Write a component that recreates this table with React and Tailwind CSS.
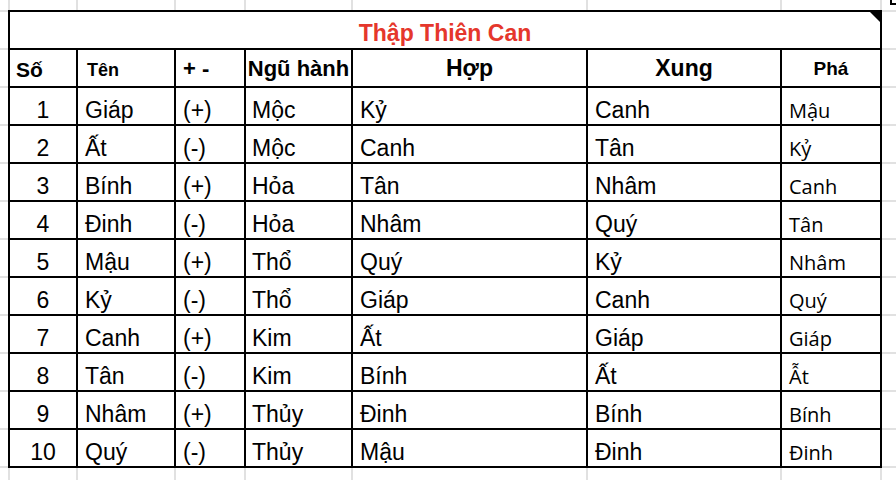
import React from "react";

const rows = [
  ["1", "Giáp", "(+)", "Mộc", "Kỷ", "Canh", "Mậu"],
  ["2", "Ất", "(-)", "Mộc", "Canh", "Tân", "Kỷ"],
  ["3", "Bính", "(+)", "Hỏa", "Tân", "Nhâm", "Canh"],
  ["4", "Đinh", "(-)", "Hỏa", "Nhâm", "Quý", "Tân"],
  ["5", "Mậu", "(+)", "Thổ", "Quý", "Kỷ", "Nhâm"],
  ["6", "Kỷ", "(-)", "Thổ", "Giáp", "Canh", "Quý"],
  ["7", "Canh", "(+)", "Kim", "Ất", "Giáp", "Giáp"],
  ["8", "Tân", "(-)", "Kim", "Bính", "Ất", "Ẫt"],
  ["9", "Nhâm", "(+)", "Thủy", "Đinh", "Bính", "Bính"],
  ["10", "Quý", "(-)", "Thủy", "Mậu", "Đinh", "Đinh"],
];

const cols = "grid-cols-[66px_96px_68px_105px_233px_192px_98px]";

function Strip({ count }) {
  return (
    <div className="flex flex-col gap-y-[2px] py-[2px] bg-[#e1e1e1] w-full">
      {Array.from({ length: count }).map((_, i) => (
        <div key={i} className="h-[36px] bg-white" />
      ))}
    </div>
  );
}

function ColStrip({ h }) {
  return (
    <div
      className={`grid grid-cols-[8px_66px_96px_68px_105px_233px_192px_98px_1fr] gap-x-[2px] bg-[#e1e1e1] ${h}`}
    >
      {Array.from({ length: 9 }).map((_, i) => (
        <div key={i} className="bg-white" />
      ))}
    </div>
  );
}

export default function App() {
  const arial = "font-['Liberation_Sans',Arial,sans-serif]";
  return (
    <div className={`relative w-[896px] h-[480px] bg-white overflow-hidden ${arial} text-black`}>
      <ColStrip h="h-[10px]" />
      <div className="flex h-[458px]">
        <div className="w-[8px]">
          <Strip count={12} />
        </div>
        <div className={`relative grid ${cols} auto-rows-[36px] gap-[2px] p-[2px] bg-black w-[874px]`}>
          <div className="relative col-span-7 bg-white flex items-end justify-center pb-[3px]">
            <span className="text-[23px] leading-none font-bold text-[#e5372c]">Thập Thiên Can</span>
            <svg className="absolute right-0 top-0" width="10" height="10" viewBox="0 0 10 10">
              <polygon points="0,0 10,0 10,10" fill="#000" />
            </svg>
          </div>
          <div className="bg-white flex items-end pl-[6px] pb-[6px] font-bold text-[21px] leading-none">Số</div>
          <div className="bg-white flex items-end pl-[9px] pb-[7px] font-bold text-[18px] leading-none">Tên</div>
          <div className="bg-white flex items-end pl-[7px] pb-[6px] font-bold text-[22px] leading-none whitespace-pre">+ -</div>
          <div className="bg-white flex items-end justify-center pb-[6px] font-bold text-[22px] leading-none whitespace-nowrap overflow-visible">
            Ngũ hành
          </div>
          <div className="bg-white flex items-end justify-center pb-[6px] font-bold text-[23px] leading-none">Hợp</div>
          <div className="bg-white flex items-end justify-center pb-[6px] font-bold text-[23px] leading-none">Xung</div>
          <div className="bg-white flex items-end justify-center pb-[8px] font-bold text-[19px] leading-none">Phá</div>
          {rows.map((r, i) => (
            <React.Fragment key={i}>
              <div className="bg-white flex items-end justify-center pb-[2px] text-[23px] leading-none">{r[0]}</div>
              <div className="bg-white flex items-end pl-[7px] pb-[2px] text-[23px] leading-none">{r[1]}</div>
              <div className="bg-white flex items-end pl-[7px] pb-[2px] text-[23px] leading-none">{r[2]}</div>
              <div className="bg-white flex items-end pl-[6px] pb-[2px] text-[23px] leading-none">{r[3]}</div>
              <div className="bg-white flex items-end pl-[7px] pb-[2px] text-[23px] leading-none">{r[4]}</div>
              <div className="bg-white flex items-end pl-[7px] pb-[2px] text-[23px] leading-none">{r[5]}</div>
              <div className="bg-white flex items-end pl-[7px] pb-[3px] text-[20px] leading-none font-['Open_Sans','Noto_Sans',sans-serif]">
                {r[6]}
              </div>
            </React.Fragment>
          ))}
        </div>
        <div className="flex-1">
          <Strip count={12} />
        </div>
      </div>
      <ColStrip h="h-[12px]" />
      <div className="absolute left-[890px] top-0 w-[6px] h-[5px] border-l-2 border-b-2 border-black" />
    </div>
  );
}
